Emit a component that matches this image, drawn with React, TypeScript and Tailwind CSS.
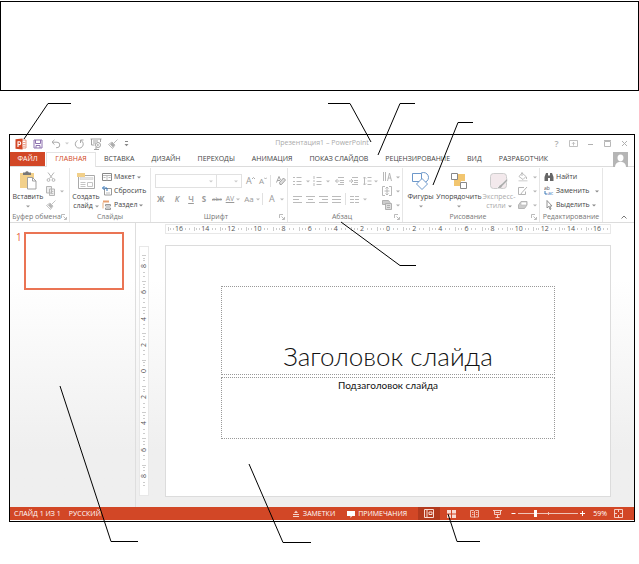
import React from 'react';

type IconProps = {
    w?: number;
    h?: number;
    className?: string;
    children: React.ReactNode;
};

const Icon = ({ w = 10, h = 10, className = '', children }: IconProps) => (
    <svg width={w} height={h} viewBox={`0 0 ${w} ${h}`} fill="none" stroke="currentColor" className={`shrink-0 ${className}`} aria-hidden="true">
        {children}
    </svg>
);

const Caret = ({ className = '' }: { className?: string }) => (
    <Icon w={4} h={3} className={className}>
        <path d="M0 0.5h4L2 2.6z" fill="currentColor" stroke="none" />
    </Icon>
);

const Tool = ({ label, className = '', children }: { label: string; className?: string; children: React.ReactNode }) => (
    <button type="button" aria-label={label} className={`flex items-center shrink-0 ${className}`}>
        {children}
    </button>
);

const Launcher = () => (
    <Icon w={6} h={6} className="text-[#aaa]">
        <path d="M0.5 4V0.5H4M2.5 2.5l2.5 2.5M5.5 3v2.5H3" strokeWidth="0.8" />
    </Icon>
);

const Separator = () => <span className="w-px h-3 shrink-0 bg-[#e1e1e1]" />;

/* Icons */

const BrushIcon = () => (
    <Icon>
        <path d="M9.5 0.5L6 4M4 3l3 3M4 3L0.5 5.5 4.5 9.5 7 6" strokeWidth="0.8" />
        <path d="M2 5.2l3 3.2 1.5-2.4L4.2 3.6z" fill="currentColor" stroke="none" />
    </Icon>
);

const LinesIcon = ({ d }: { d: string }) => (
    <Icon w={9}>
        <path d={d} />
    </Icon>
);

const tabs = ['ВСТАВКА', 'ДИЗАЙН', 'ПЕРЕХОДЫ', 'АНИМАЦИЯ', 'ПОКАЗ СЛАЙДОВ', 'РЕЦЕНЗИРОВАНИЕ', 'ВИД', 'РАЗРАБОТЧИК'];

const TitleBar = () => (
    <header className="h-[17px] grid grid-cols-[1fr_auto_1fr] items-center px-[5px] text-[#aaa]">
        <div className="flex items-center">
            <Icon w={12} h={12}>
                <path d="M6 2h5v8H6" fill="#fff" stroke="#e58a72" strokeWidth="0.9" />
                <path d="M8 4.5h2.5M8 6.5h2.5M8 8.2h2.5" stroke="#e58a72" strokeWidth="0.8" />
                <path d="M0.5 1.3L7.500 0.500v11L0.500 10.700z" fill="#d24726" stroke="none" />
                <path d="M3 9V3.800h1.300a1.400 1.400 0 010 2.800H3" stroke="#fff" strokeWidth="1.1" />
            </Icon>
            <Tool label="Сохранить" className="ml-1.5">
                <Icon className="text-[#8e72b0]">
                    <path d="M1 1h8v8H1zM2.5 1v3.5h5V1M3 9V6.5h4V9" />
                </Icon>
            </Tool>
            <Tool label="Отменить" className="ml-2 gap-1">
                <Icon>
                    <path d="M3.5 0.8L1 3.2l2.5 2.4M1 3.2h5a2.7 2.7 0 010 5.5H5" />
                </Icon>
                <Caret className="text-[#ccc]" />
            </Tool>
            <Tool label="Повторить" className="ml-[5px]">
                <Icon>
                    <path d="M3.5 1.5A4 4 0 107 1.500M6.500 4V1H9.500" />
                </Icon>
            </Tool>
            <Tool label="С начала" className="ml-1.5">
                <Icon w={12} h={12} className="text-[#999]">
                    <path d="M0.5 1h11M1.5 1v6h3M10.5 1v3M3 3h5M3 5h3M4 11.5h5M6 9v2.5" strokeWidth="0.9" />
                    <circle cx="8" cy="7" r="2.5" fill="#fff" strokeWidth="0.9" />
                    <path d="M7.3 5.8v2.4L9.2 7z" fill="currentColor" stroke="none" />
                </Icon>
            </Tool>
            <Tool label="Формат по образцу" className="ml-1.5">
                <BrushIcon />
            </Tool>
            <Tool label="Настройка панели" className="ml-1.5">
                <Icon w={5} h={6} className="text-[#888]">
                    <path d="M1 0.5h3" />
                    <path d="M0.5 3h4l-2 2.2z" fill="currentColor" stroke="none" />
                </Icon>
            </Tool>
        </div>
        <h1 className="text-[7px] text-[#aaa]">Презентация1 – PowerPoint</h1>
        <div className="flex items-center justify-end gap-2 text-[#b0b0b0]">
            <button type="button" aria-label="Справка" className="w-[9px] text-[9px] leading-3 font-semibold">?</button>
            <Tool label="Параметры ленты">
                <Icon w={9} h={9}>
                    <path d="M0.5 1.5h8v6h-8zM4.5 6.5V3.5M3 4.8l1.5-1.5L6 4.8" strokeWidth="0.8" />
                </Icon>
            </Tool>
            <Tool label="Свернуть">
                <Icon w={9} h={9}><path d="M2 5.5h5" /></Icon>
            </Tool>
            <Tool label="Развернуть">
                <Icon w={9} h={9}><path d="M1.5 2.5h6v5h-6zM1 1.500h7" strokeWidth="0.9" /></Icon>
            </Tool>
            <Tool label="Закрыть">
                <Icon w={9} h={9}><path d="M2 2l5 5M7 2L2 7" /></Icon>
            </Tool>
        </div>
    </header>
);

const TabBar = () => (
    <nav className="h-[15px] flex items-stretch text-[7px] leading-[14px] text-[#444] border-b border-[#dcdcdc]">
        <button type="button" className="w-[35px] mr-px bg-[#d24726] text-white">ФАЙЛ</button>
        <button type="button" className="w-[50px] -mb-px pb-0.5 bg-white border-x border-t border-[#e4e4e4] leading-3 text-[#d24726]">ГЛАВНАЯ</button>
        {tabs.map((tab) => (
            <button key={tab} type="button" className="pl-2 pr-[9px] whitespace-nowrap">{tab}</button>
        ))}
        <button type="button" aria-label="Учётная запись" className="ml-auto mr-1.5">
            <Icon w={15} h={15}>
                <path d="M0 0h15v15H0z" fill="#b5b5b5" stroke="none" />
                <path d="M7.5 2.500c2 0 3 1.400 3 3.400S9 9.500 7.500 9.500 4.500 8 4.500 5.900 5.500 2.500 7.500 2.500zM2 15c0-3 2-4.500 4-5h3c2 .5 4 2 4 5z" fill="#fff" stroke="none" />
            </Icon>
        </button>
    </nav>
);

type GroupProps = {
    title: string;
    width: string;
    launcher?: boolean;
    children: React.ReactNode;
};

const Group = ({ title, width, launcher = true, children }: GroupProps) => (
    <section className={`${width} shrink-0 flex flex-col border-r border-[#e6e6e6]`}>
        <div className="flex-1 flex">{children}</div>
        <div className="h-2.5 flex items-center px-0.5 text-[#777] leading-[10px]">
            <span className="flex-1 flex justify-center whitespace-nowrap">{title}</span>
            {launcher && <Launcher />}
        </div>
    </section>
);

type BigProps = {
    icon: React.ReactNode;
    width: string;
    text: string;
    second?: string;
    className?: string;
};

const BigButton = ({ icon, width, text, second, className = '' }: BigProps) => (
    <button type="button" className={`${width} shrink-0 flex flex-col items-center pt-0.5 leading-[10px] whitespace-nowrap ${className}`}>
        {icon}
        <span className="mt-0.5">{text}</span>
        <span className="h-2 flex items-center gap-0.5">
            {second}
            <Caret className="text-[#999]" />
        </span>
    </button>
);

const RowButton = ({ icon, text, caret }: { icon: React.ReactNode; text: string; caret?: string }) => (
    <button type="button" className="h-3.5 flex items-center gap-0.5 whitespace-nowrap">
        {icon}
        {text}
        {caret && <Caret className={`text-[#888] ${caret}`} />}
    </button>
);

const ClipboardGroup = () => (
    <Group title="Буфер обмена" width="w-[60px]">
        <BigButton
            width="w-[34px]"
            text="Вставить"
            className="ml-px"
            icon={
                <Icon w={18} h={20}>
                    <path d="M1 3h14v15H1z" fill="#f2d08a" stroke="none" />
                    <path d="M4 2.500h2.200a2 2 0 013.600 0H12V5H4z" fill="#777" stroke="none" />
                    <path d="M8.500 7.500h5l3.500 3.500v8H8.500z" fill="#fff" stroke="#999" strokeWidth="0.9" />
                    <path d="M13.500 7.500V11H17" stroke="#999" strokeWidth="0.9" />
                </Icon>
            }
        />
        <div className="flex flex-col pt-0.5 pl-px text-[#b5b5b5]">
            <Tool label="Вырезать" className="h-3.5">
                <Icon>
                    <path d="M2 0.500l4.500 6M8 0.500l-4.500 6" />
                    <circle cx="2.500" cy="8" r="1.400" />
                    <circle cx="7.500" cy="8" r="1.400" />
                </Icon>
            </Tool>
            <Tool label="Копировать" className="h-3.5 gap-1">
                <Icon>
                    <path d="M0.500 0.500h5v6.500h-5zM3.500 3h5v6.500h-5z" fill="#eee" />
                    <path d="M4.800 5.500h2.500M4.800 7.500h2.500" strokeWidth="0.800" />
                </Icon>
                <Caret />
            </Tool>
            <Tool label="Формат" className="h-3.5"><BrushIcon /></Tool>
        </div>
    </Group>
);

const SlidesGroup = () => (
    <Group title="Слайды" width="w-[81px]" launcher={false}>
        <BigButton
            width="w-[32px]"
            text="Создать"
            second="слайд"
            icon={
                <Icon w={18} h={20}>
                    <path d="M1.500 5.500h16v13h-16z" fill="#fff" stroke="#aaa" />
                    <path d="M3 7.500h13v2H3z" fill="#e4e4e4" stroke="#ccc" strokeWidth="0.500" />
                    <path d="M3.500 12.500h5M3.500 14.500h5M3.500 16.500h5M10.500 12.500h5v4h-5z" stroke="#c4c4c4" />
                    <path d="M0 3h8v4H0z" fill="#f2d08a" stroke="none" />
                </Icon>
            }
        />
        <div className="flex flex-col pt-0.5">
            <RowButton
                text="Макет"
                caret=" "
                icon={<Icon><path d="M0.500 1.500h9v7h-9z" fill="#fff" stroke="#888" /><path d="M1 3.500h8M5 3.500v5M6.500 5.500h2M1.500 5.500h2" stroke="#bbb" /></Icon>}
            />
            <RowButton
                text="Сбросить"
                icon={<Icon><path d="M2.500 2.500h7v6.500h-7z" fill="#fff" stroke="#999" /><path d="M4 7h4" stroke="#bbb" /><path d="M2.500 0L0.500 2l2 2M0.500 2h4.500v3" stroke="#3a78b8" /></Icon>}
            />
            <RowButton
                text="Раздел"
                caret=" "
                icon={<Icon><path d="M1 1.500h6" stroke="#e8a070" strokeWidth="2" /><path d="M3.500 4.500h5v1.500h-5zM3.500 8h5v1.500h-5z" stroke="#999" /><path d="M1 2.500v6" stroke="#e8b080" /></Icon>}
            />
        </div>
    </Group>
);

const FontGroup = () => (
    <Group title="Шрифт" width="w-[137px]">
        <div className="flex flex-col pt-1.5 pl-1 text-[#999]">
            <div className="flex items-center h-3.5">
                <div className="relative">
                    <select aria-label="Шрифт" className="block w-[62px] h-3.5 appearance-none border border-[#e1e1e1] bg-white" />
                    <Caret className="absolute right-1 top-1.5 text-[#ccc]" />
                </div>
                <div className="relative">
                    <select aria-label="Размер шрифта" className="block w-[25px] h-3.5 appearance-none border border-l-0 border-[#e1e1e1] bg-white" />
                    <Caret className="absolute right-1 top-1.5 text-[#ccc]" />
                </div>
                <Tool label="Увеличить размер" className="ml-1 w-[13px] text-[9px]">
                    A
                    <Icon w={3} h={8}><path d="M0 2L1.500 0.500 3 2" strokeWidth="0.8" /></Icon>
                </Tool>
                <Tool label="Уменьшить размер" className="w-[11px] text-[8px]">
                    A
                    <Icon w={3} h={8}><path d="M0 0.500L1.500 2 3 0.500" strokeWidth="0.8" /></Icon>
                </Tool>
                <Separator />
                <Tool label="Очистить формат" className="ml-[5px]">
                    <Icon>
                        <path d="M0.500 6.500L3 0.500l1.500 3.500M1.500 4.500h2.500" strokeWidth="0.900" />
                        <path d="M3.500 6.500L7.500 2l2 2-4 4.500h-1.500z" fill="#ddd" strokeWidth="0.900" />
                    </Icon>
                </Tool>
            </div>
            <div className="flex items-center h-3.5 mt-1 pl-0.5 text-[8px]">
                <button type="button" className="w-[13px] text-left font-bold">Ж</button>
                <button type="button" className="w-[14px] text-center italic font-semibold">К</button>
                <button type="button" className="w-[14px] text-center font-semibold underline">Ч</button>
                <button type="button" className="w-[12px] text-center font-bold">S</button>
                <button type="button" className="w-[14px] text-center text-[6px] line-through">abc</button>
                <Tool label="Интервал" className="w-[18px] gap-0.5 justify-center">
                    <span className="text-[7px] leading-[8px] underline">AV</span>
                    <Caret className="text-[#bbb]" />
                </Tool>
                <Tool label="Регистр" className="w-[20px] gap-0.5 justify-center">
                    <span>Aa</span>
                    <Caret className="text-[#bbb]" />
                </Tool>
                <Separator />
                <Tool label="Цвет текста" className="ml-1.5 gap-[5px]">
                    <span className="text-[9px]">A</span>
                    <Caret className="text-[#bbb]" />
                </Tool>
            </div>
        </div>
    </Group>
);

const ParagraphGroup = () => (
    <Group title="Абзац" width="w-[115px]">
        <div className="flex flex-col w-[90px] shrink-0 pt-1.5 pl-[5px] text-[#bbb]">
            <div className="flex items-center h-3.5">
                <Tool label="Маркеры" className="w-5 gap-1"><LinesIcon d="M0 1.500h2M3.500 1.500h5M0 5.500h2M3.500 5.500h5M0 8.500h2M3.500 8.500h5" /><Caret /></Tool>
                <Tool label="Нумерация" className="w-[22px] gap-1"><LinesIcon d="M1 0v3M3.500 1.500h5M1 4v2M3.500 5.500h5M1 7v3M3.500 8.500h5" /><Caret /></Tool>
                <Tool label="Уменьшить отступ" className="w-[14px]"><LinesIcon d="M3 1.500h6M5 4.500h4M5 6.500h4M3 8.500h6M0.500 5h4M2.500 3l-2 2 2 2" /></Tool>
                <Tool label="Увеличить отступ" className="w-[14px]"><LinesIcon d="M3 1.500h6M5 4.500h4M5 6.500h4M3 8.500h6M0 5h4M2 3l2 2-2 2" /></Tool>
                <Tool label="Междустрочный интервал" className="gap-0.5"><LinesIcon d="M1.500 1v8M0 2.500L1.500 1 3 2.500M0 7.500L1.500 9 3 7.500M4.500 1.500h4M4.500 5h4M4.500 8.500h4" /><Caret /></Tool>
            </div>
            <div className="flex items-center h-3.5 mt-1">
                <Tool label="По левому краю" className="w-[13px]"><LinesIcon d="M0 2.500h9M0 5.500h6M0 8.500h9" /></Tool>
                <Tool label="По центру" className="w-[13px]"><LinesIcon d="M0 2.500h9M2 5.500h5M0 8.500h9" /></Tool>
                <Tool label="По правому краю" className="w-[13px]"><LinesIcon d="M0 2.500h9M3 5.500h6M0 8.500h9" /></Tool>
                <Tool label="По ширине" className="w-[13px]"><LinesIcon d="M0 2.500h9M0 5.500h9M0 8.500h9" /></Tool>
                <Separator />
                <Tool label="Колонки" className="ml-1 gap-1"><LinesIcon d="M0 2.500h4M5 2.500h4M0 5.500h4M5 5.500h4M0 8.500h4M5 8.500h4" /><Caret /></Tool>
            </div>
        </div>
        <div className="flex flex-col pt-0.5 pl-1 text-[#b0b0b0]">
            <Tool label="Направление текста" className="h-3.5 gap-1">
                <Icon><path d="M1.500 0v9M3.500 0v9M5.500 9L7.500 1l2 8M6 6h3" strokeWidth="0.900" /></Icon><Caret />
            </Tool>
            <Tool label="Выровнять текст" className="h-3.5 gap-1">
                <Icon><path d="M3 0.500H0.500v9H3M7 0.500h2.500v9H7M5 1v8M3.500 2.500L5 1l1.500 1.500M3.500 7.500L5 9l1.500-1.500M2.500 5h5" strokeWidth="0.900" /></Icon><Caret />
            </Tool>
            <Tool label="SmartArt" className="h-3.5 gap-1">
                <Icon><path d="M0.500 0.500h6l1.500 2-1.500 2h-6z" fill="#ccc" /><path d="M3.500 3.500h6v6h-6z" fill="#ddd" /><path d="M5 5.500h3M5 7.500h3" /></Icon><Caret />
            </Tool>
        </div>
    </Group>
);

const DrawingGroup = () => (
    <Group title="Рисование" width="w-[137px]">
        <BigButton
            width="w-[33px]"
            text="Фигуры"
            className="ml-px"
            icon={
                <Icon w={18} h={20} className="text-[#5c8cc4]">
                    <circle cx="11.500" cy="7.500" r="5" fill="#fff" strokeWidth="0.900" />
                    <path d="M0.500 3.500h9v8h-9z" fill="#fff" strokeWidth="0.900" />
                    <path d="M10 8.500l5.500 5.500-5.500 5.500L4.500 14z" fill="#fff" strokeWidth="0.900" />
                </Icon>
            }
        />
        <BigButton
            width="w-[44px]"
            text="Упорядочить"
            icon={
                <Icon w={18} h={20}>
                    <path d="M8 4h7v7H8zM4 9h7v7H4z" fill="#f2c670" stroke="none" />
                    <path d="M1.500 3.500h6v6h-6zM10.500 12.500h6v6h-6z" fill="#fff" stroke="#888" />
                </Icon>
            }
        />
        <BigButton
            width="w-[36px]"
            text="Экспресс-"
            second="стили"
            className="text-[#aaa]"
            icon={
                <Icon w={18} h={20}>
                    <rect x="0.500" y="3.500" width="16" height="15" rx="3" fill="#f3e9ec" stroke="#ccc" />
                    <path d="M17.500 8L11 14.500c-2 0-2 2.500-4 3.500 2.500 1 5 .5 5.500-2L17.500 11z" fill="#aaa" stroke="#fff" strokeWidth="0.600" />
                </Icon>
            }
        />
        <div className="flex flex-col pt-0.5 pl-px text-[#b5b5b5]">
            <Tool label="Заливка фигуры" className="h-3.5 gap-[5px]">
                <Icon><path d="M4 1l4 3.500-3 3-4-3zM4 0v4M8.500 5v2" strokeWidth="0.900" /><path d="M0.500 8h9v1.500h-9z" fill="#ddd" stroke="none" /></Icon><Caret />
            </Tool>
            <Tool label="Контур фигуры" className="h-3.5 gap-[5px]">
                <Icon><path d="M6 1.500H0.500v7h7V5.500M9 1L4 6.500l-1 1.500" /></Icon><Caret />
            </Tool>
            <Tool label="Эффекты фигуры" className="h-3.5 gap-[5px]">
                <Icon><path d="M0.500 5L3 1.500h6V5L6.500 8.500h-6z" fill="#ccc" /><path d="M3 2h5.500v3H3z" fill="#fff" strokeWidth="0.600" /></Icon><Caret />
            </Tool>
        </div>
    </Group>
);

const EditingGroup = () => (
    <Group title="Редактирование" width="w-[63px]" launcher={false}>
        <div className="flex flex-col pt-0.5 pl-1">
            <RowButton
                text="Найти"
                icon={<Icon><path d="M2 1h2v2.500h2V1h2l1.500 4v4H6V6H4v3H0.500V5z" fill="#666" stroke="none" /></Icon>}
            />
            <RowButton
                text="Заменить"
                caret="ml-1"
                icon={<Icon><text x="0" y="4" fontSize="5" fill="#555" stroke="none">ab</text><text x="4" y="9" fontSize="5" fill="#3a78b8" stroke="none">ac</text><path d="M1 5v3h2.500" stroke="#3a78b8" /></Icon>}
            />
            <RowButton
                text="Выделить"
                caret=" "
                icon={<Icon><path d="M3 0.500v7.500l1.800-1.700L6 9.500l1-.5-1.200-3H8z" fill="#fff" stroke="#888" strokeWidth="0.900" /></Icon>}
            />
        </div>
    </Group>
);

const hTicks = ['h-1', 'h-0.5', 'h-0.5'];
const vTicks = ['w-1', 'w-0.5', 'w-0.5'];
const scale = [16, 14, 12, 10, 8, 6, 4, 2, 0, 2, 4, 6, 8, 10, 12, 14, 16];

const HorizontalRuler = () => (
    <div className="h-2.5 flex border border-[#e8e8e8] bg-white text-[7px] leading-[8px] text-[#555]">
        {scale.map((n, i) => (
            <div key={i} className="flex-1 flex items-center">
                <span className="flex-1 flex items-center justify-evenly">
                    {hTicks.map((t, j) => <i key={j} className={`w-px bg-[#ccc] ${t}`} />)}
                </span>
                <span>{n}</span>
                <span className="flex-1 flex items-center justify-evenly">
                    {hTicks.slice(1).map((t, j) => <i key={j} className={`w-px bg-[#ccc] ${t}`} />)}
                </span>
            </div>
        ))}
    </div>
);

const VerticalRuler = () => (
    <div className="w-2.5 flex flex-col py-1.5 border border-[#e8e8e8] bg-white text-[7px] text-[#555]">
        {scale.slice(4, 13).map((n, i) => (
            <div key={i} className="flex-1 flex flex-col items-center">
                <span className="flex-1 flex flex-col items-center justify-evenly">
                    {vTicks.map((t, j) => <i key={j} className={`h-px bg-[#ccc] ${t}`} />)}
                </span>
                <span className="h-1.5 leading-[6px] -rotate-90">{n}</span>
                <span className="flex-1 flex flex-col items-center justify-evenly">
                    {vTicks.slice(1).map((t, j) => <i key={j} className={`h-px bg-[#ccc] ${t}`} />)}
                </span>
            </div>
        ))}
    </div>
);

const Workspace = () => (
    <main className="flex-1 flex bg-linear-to-b from-white from-20% to-[#efefef] to-80%">
        <aside className="w-[126px] shrink-0 flex items-start pt-[9px] pl-1.5 pr-[11px] border-r border-[#dedede]">
            <span className="w-2 text-[10px] leading-[10px] text-[#e8643c]">1</span>
            <button type="button" aria-label="Слайд 1" className="flex-1 h-[58px] border-2 border-[#ea7454] bg-white" />
        </aside>
        <div className="flex pt-[23px] pb-[11px] pl-[3px]">
            <VerticalRuler />
        </div>
        <div className="flex-1 flex flex-col pt-px pl-4 pr-[23px] pb-[10px]">
            <HorizontalRuler />
            <article className="flex-1 flex flex-col mt-[11px] px-[55px] pt-10 pb-[57px] border border-[#dcdcdc] bg-white font-['Lato',sans-serif] text-[#111]">
                <div className="flex-3 flex items-end justify-center border border-dotted border-[#999] pb-0.5">
                    <h2 className="text-[26px] leading-8 font-light">Заголовок слайда</h2>
                </div>
                <div className="h-[62px] mt-0.5 text-center border border-dotted border-[#999]">
                    <p className="text-[10px] leading-[14px]">Подзаголовок слайда</p>
                </div>
            </article>
        </div>
    </main>
);

const StatusBar = () => (
    <footer className="h-[13px] mb-px flex items-center pl-1 pr-[11px] bg-[#d24726] text-[7px] leading-[13px] text-white whitespace-nowrap">
        <span>СЛАЙД 1 ИЗ 1</span>
        <button type="button" className="ml-2">РУССКИЙ</button>
        <button type="button" className="ml-auto flex items-center gap-[3px]">
            <Icon w={8} h={8} className="text-[#f6d5cc]"><path d="M1 4.500h6M1 6.500h6" /><path d="M4 0.500L6 3H2z" fill="currentColor" stroke="none" /></Icon>
            ЗАМЕТКИ
        </button>
        <button type="button" className="ml-3 flex items-center gap-[3px]">
            <Icon w={8} h={8}><path d="M0 1h8v5H5L3.500 8V6H0z" fill="currentColor" stroke="none" /></Icon>
            ПРИМЕЧАНИЯ
        </button>
        <div className="ml-[11px] flex self-stretch text-[#f8dcd4]">
            <Tool label="Обычный" className="w-[22px] justify-center bg-[#b33a1e]">
                <Icon><path d="M0.500 0.500h9v8h-9zM3 0.500v8M5 3h3v2.500H5z" /></Icon>
            </Tool>
            <Tool label="Сортировщик слайдов" className="w-[23px] justify-center">
                <Icon w={9} h={8}><path d="M0 0h4v3.500H0zM5 0h4v3.500H5zM0 4.500h4V8H0zM5 4.500h4V8H5z" fill="currentColor" stroke="none" /></Icon>
            </Tool>
            <Tool label="Режим чтения" className="w-[23px] justify-center">
                <Icon w={9} h={8}><path d="M4.500 1.500v6M0.500 0.500h3l1 1 1-1h3v6.500H0.500zM2 2.500h1.500M2 4.500h1.500M6 2.500h1.500M6 4.500h1.500" strokeWidth="0.800" /></Icon>
            </Tool>
            <Tool label="Показ слайдов" className="w-[22px] justify-center">
                <Icon w={9} h={8}><path d="M0 0.500h9M1.500 1v3.500h6V1M2.500 2.500h4M4.500 4.500v3M2.500 7.500h4" strokeWidth="0.9" /></Icon>
            </Tool>
        </div>
        <Tool label="Уменьшить" className="ml-[3px]"><Icon w={5} h={5}><path d="M0.500 2.500h4" /></Icon></Tool>
        <div className="relative flex items-center ml-0.5">
            <input
                type="range"
                aria-label="Масштаб"
                defaultValue={28}
                className="block w-[60px] h-px appearance-none bg-[#f0c4b8] [&::-webkit-slider-thumb]:appearance-none [&::-webkit-slider-thumb]:w-[3px] [&::-webkit-slider-thumb]:h-[7px] [&::-webkit-slider-thumb]:bg-white"
            />
            <span className="absolute left-1/2 h-[3px] w-px bg-[#f0c4b8]" />
        </div>
        <Tool label="Увеличить" className="ml-0.5"><Icon w={5} h={5}><path d="M0 2.500h5M2.500 0v5" /></Icon></Tool>
        <span className="ml-2">59%</span>
        <Tool label="По размеру окна" className="ml-[7px] text-[#f8dcd4]">
            <Icon w={9} h={9}><path d="M0.500 0.500h8v8h-8zM4.500 0.500v2.500M4.500 6v2.500M0.500 4.500H3M6 4.500h2.500" strokeWidth="0.900" /></Icon>
        </Tool>
    </footer>
);

const callouts = [
    '71,103.5 48,103.5 24,139',
    '328,103.5 350,103.5 371,142',
    '415,103.5 400,103.5 378,155',
    '473,122.5 458,122.5 433,185',
    '416,265.5 400,265.5 341,222',
    '60,386 111,541.5 138,541.5',
    '249,464 283,542.5 311,542.5',
    '448,514 457,541.5 480,541.5',
];

const Callouts = () => (
    <svg viewBox="0 0 639 564" preserveAspectRatio="none" className="absolute inset-0 w-full h-full pointer-events-none" aria-hidden="true">
        {callouts.map((points) => (
            <polyline key={points} points={points} fill="none" stroke="#000" vectorEffect="non-scaling-stroke" />
        ))}
    </svg>
);

const App = () => {
    return (
        <div className="relative min-h-screen flex flex-col bg-white pt-px pb-[42px] font-['Open_Sans',sans-serif]">

            {/* Empty caption box */}
            <div className="h-[90px] border border-black" />

            <div className="flex-1 flex flex-col mt-[43px] ml-[9px] mr-1 border border-black bg-white">
                <TitleBar />
                <TabBar />
                <div className="h-14 flex pt-px border-b border-[#dcdcdc] text-[7px] text-[#444]">
                    <ClipboardGroup />
                    <SlidesGroup />
                    <FontGroup />
                    <ParagraphGroup />
                    <DrawingGroup />
                    <EditingGroup />
                    <Tool label="Свернуть ленту" className="ml-auto mr-[7px] mb-0.5 self-end">
                        <Icon w={6} h={6} className="text-[#777]"><path d="M0.500 4.500L3 2l2.500 2.500" /></Icon>
                    </Tool>
                </div>
                <Workspace />
                <StatusBar />
            </div>

            <Callouts />

        </div>
    );
};

export default App;
